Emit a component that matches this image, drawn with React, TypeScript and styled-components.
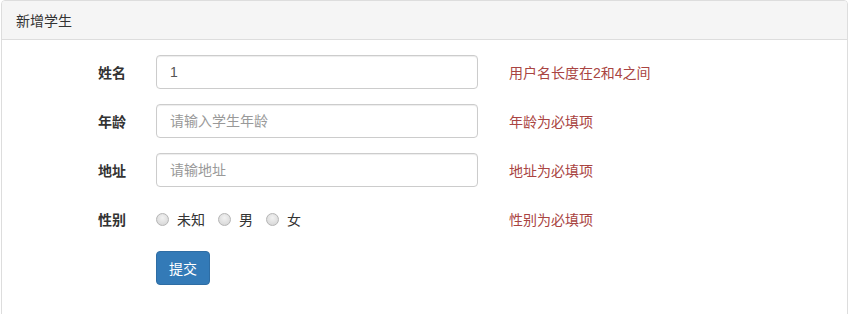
import styled, { createGlobalStyle } from "styled-components";

const GlobalStyle = createGlobalStyle`
  body {
    margin: 0;
    background: #fff;
    font-family: "Helvetica Neue", "Liberation Sans", "Noto Sans CJK SC", sans-serif;
    font-size: 14px;
    color: #333;
  }
`;

const Panel = styled.div`
  margin-left: 1px;
  width: 845px;
  border: 1px solid #ddd;
  border-radius: 4px 4px 0 0;
  background: #fff;
`;

const PanelHeading = styled.div`
  height: 38px;
  display: flex;
  align-items: center;
  padding: 0 14px;
  background: #f5f5f5;
  border-bottom: 1px solid #ddd;
  border-radius: 3px 3px 0 0;
  font-size: 14px;
  color: #333;
`;

const PanelBody = styled.form`
  padding: 15px 0 40px;
  display: grid;
  grid-template-columns: 124px 322px auto;
  column-gap: 30px;
  row-gap: 15px;
  align-items: center;
`;

const Label = styled.label`
  text-align: right;
  font-weight: bold;
  font-size: 14px;
  color: #333;
`;

const Input = styled.input`
  box-sizing: border-box;
  width: 322px;
  height: 34px;
  padding: 6px 13px;
  border: 1px solid #ccc;
  border-radius: 4px;
  font-family: inherit;
  font-size: 14px;
  color: #555;
  box-shadow: inset 0 1px 1px rgba(0, 0, 0, 0.075);
  outline: none;

  &::placeholder {
    color: #999;
  }
`;

const Help = styled.span`
  padding-left: 1px;
  font-size: 14px;
  color: #a94442;
`;

const RadioGroup = styled.div`
  height: 34px;
  display: flex;
  align-items: center;
  gap: 13px;
`;

const RadioOption = styled.label`
  display: flex;
  align-items: center;
  gap: 8px;
  font-size: 14px;
  color: #333;
`;

const RadioDot = styled.span`
  width: 11px;
  height: 11px;
  border-radius: 50%;
  border: 1px solid #b5b5b5;
  background: radial-gradient(circle at 50% 35%, #f2f2f2, #d2d2d2);
`;

const Spacer = styled.div``;

const SubmitButton = styled.button`
  grid-column: 2;
  justify-self: start;
  width: 54px;
  height: 34px;
  border: 1px solid #2e6da4;
  border-radius: 4px;
  background: #337ab7;
  color: #fff;
  font-family: inherit;
  font-size: 14px;
  padding: 0;
`;

const fields = [
  { label: "姓名", value: "1", placeholder: "", help: "用户名长度在2和4之间" },
  { label: "年龄", value: "", placeholder: "请输入学生年龄", help: "年龄为必填项" },
  { label: "地址", value: "", placeholder: "请输地址", help: "地址为必填项" },
];

const genders = ["未知", "男", "女"];

export default function App() {
  return (
    <>
      <GlobalStyle />
      <Panel>
        <PanelHeading>新增学生</PanelHeading>
        <PanelBody onSubmit={(e) => e.preventDefault()}>
          {fields.map((f) => (
            <>
              <Label key={f.label}>{f.label}</Label>
              <Input defaultValue={f.value} placeholder={f.placeholder} />
              <Help>{f.help}</Help>
            </>
          ))}
          <Label>性别</Label>
          <RadioGroup>
            {genders.map((g) => (
              <RadioOption key={g}>
                <RadioDot />
                {g}
              </RadioOption>
            ))}
          </RadioGroup>
          <Help>性别为必填项</Help>
          <SubmitButton type="submit">提交</SubmitButton>
          <Spacer />
        </PanelBody>
      </Panel>
    </>
  );
}
